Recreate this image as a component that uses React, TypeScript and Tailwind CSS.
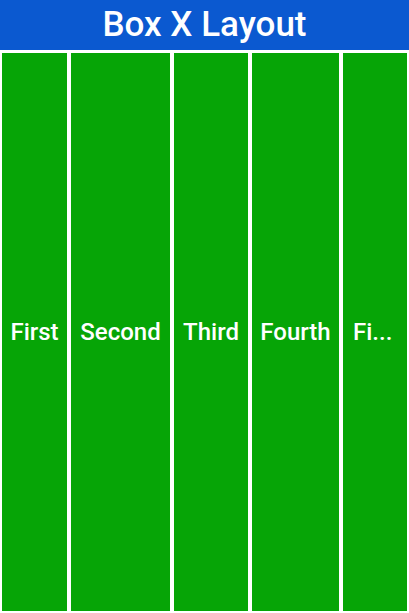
const items = [
  { label: 'First', box: 'w-[65px] shrink-0 justify-center' },
  { label: 'Second', box: 'w-[99px] shrink-0 justify-center' },
  { label: 'Third', box: 'w-[74px] shrink-0 justify-center' },
  { label: 'Fourth', box: 'w-[87px] shrink-0 justify-center' },
  { label: 'Fi...', box: 'min-w-0 flex-1 px-[10px]' },
]

export default function App() {
  return (
    <div className="flex h-[613px] w-[409px] flex-col bg-white" style={{ fontFamily: 'Roboto, sans-serif' }}>
      <div className="flex h-[50px] shrink-0 items-center justify-center bg-[#0b59d0] text-[35px] font-medium text-white">
        Box X Layout
      </div>
      <div className="flex min-h-0 flex-1 gap-[4px] px-[2px] pt-[3px] pb-[2px]">
        {items.map((item) => (
          <div
            key={item.label}
            className={`flex items-center bg-[#06a506] text-[24px] font-medium text-white ${item.box}`}
          >
            <span className="whitespace-nowrap">{item.label}</span>
          </div>
        ))}
      </div>
    </div>
  )
}
